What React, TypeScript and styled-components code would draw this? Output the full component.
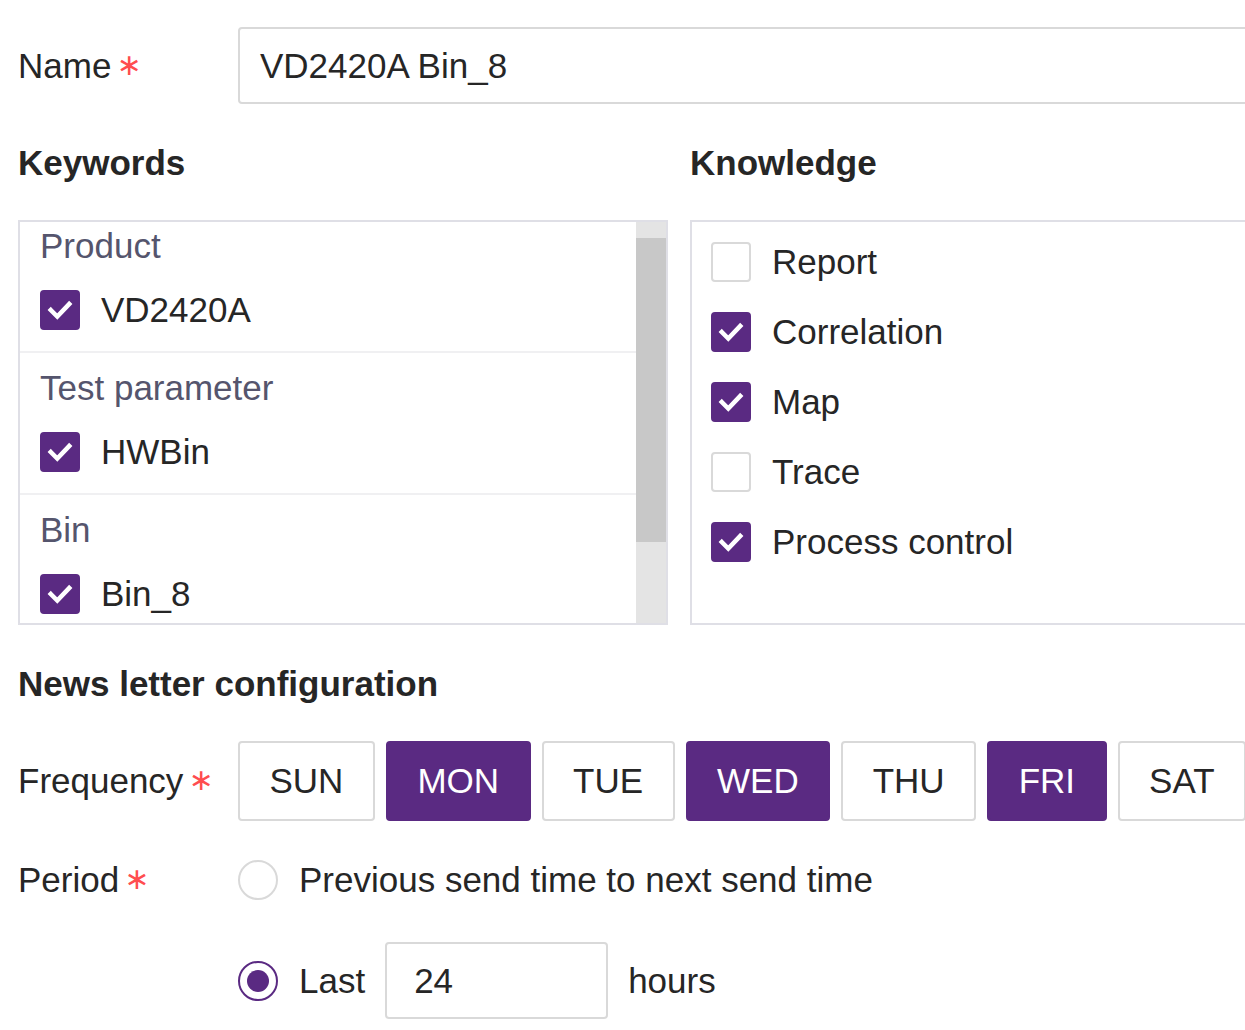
import React from 'react';
import styled, { createGlobalStyle } from 'styled-components';

const Global = createGlobalStyle`
  html, body {
    margin: 0;
    padding: 0;
    overflow: hidden;
    background: #ffffff;
  }
  body {
    font-family: "Liberation Sans", Arial, sans-serif;
    color: #262626;
  }
`;

const PURPLE = '#5a2a82';

const Page = styled.div`
  width: 1300px;
  padding: 27px 0 0 18px;
  box-sizing: border-box;
  font-size: 35px;
`;

const Row = styled.div<{ top?: number; height: number }>`
  display: flex;
  align-items: center;
  height: ${p => p.height}px;
  margin-top: ${p => p.top || 0}px;
`;

const Label = styled.div`
  width: 220px;
  flex: none;
  display: flex;
  align-items: center;
  line-height: 40px;
`;

const Star = styled.span`
  color: #ff4d4f;
  font-family: "DejaVu Sans", sans-serif;
  font-size: 30px;
  margin-left: 5px;
  position: relative;
  top: -1px;
`;

const TextInput = styled.div<{ width?: number }>`
  box-sizing: border-box;
  height: 77px;
  ${p => (p.width ? `width: ${p.width}px;` : 'flex: 1;')}
  border: 2px solid #d9d9d9;
  border-radius: 4px;
  display: flex;
  align-items: center;
  padding-left: ${p => (p.width ? 27 : 20)}px;
`;

const Heading = styled.div<{ top: number }>`
  font-weight: bold;
  line-height: 40px;
  margin-top: ${p => p.top}px;
`;

const Columns = styled.div`
  display: grid;
  grid-template-columns: 650px 1fr;
  column-gap: 22px;
`;

const Panel = styled.div`
  margin-top: 37px;
  height: 405px;
  box-sizing: border-box;
  border: 2px solid #dfdfe6;
  display: flex;
  overflow: hidden;
`;

const ScrollArea = styled.div`
  flex: 1;
  overflow: hidden;
`;

const GroupList = styled.div`
  margin-top: -11px;
`;

const Group = styled.div`
  padding: 15px 0 21px 20px;
  border-bottom: 2px solid #f0f0f2;
`;

const GroupTitle = styled.div`
  line-height: 40px;
  color: #55556d;
`;

const Option = styled.div<{ top?: number }>`
  display: flex;
  align-items: center;
  height: 40px;
  margin-top: ${p => p.top || 0}px;
  gap: 21px;
`;

const Box = styled.span<{ checked: boolean }>`
  width: 40px;
  height: 40px;
  box-sizing: border-box;
  border-radius: 4px;
  flex: none;
  display: flex;
  align-items: center;
  justify-content: center;
  background: ${p => (p.checked ? PURPLE : '#ffffff')};
  border: 2px solid ${p => (p.checked ? PURPLE : '#d9d9d9')};
`;

const Track = styled.div`
  width: 30px;
  flex: none;
  background: #e4e4e4;
  padding-top: 16px;
`;

const Thumb = styled.div`
  height: 304px;
  background: #c8c8c8;
`;

const KnowledgeList = styled.div`
  padding: 20px 0 0 19px;
  display: flex;
  flex-direction: column;
  gap: 30px;
`;

const Days = styled.div`
  display: flex;
  gap: 11px;
`;

const Day = styled.div<{ active: boolean }>`
  height: 80px;
  box-sizing: border-box;
  padding: 0 29.5px;
  display: flex;
  align-items: center;
  border-radius: 4px;
  border: 2px solid ${p => (p.active ? PURPLE : '#d9d9d9')};
  background: ${p => (p.active ? PURPLE : '#ffffff')};
  color: ${p => (p.active ? '#ffffff' : '#262626')};
`;

const Radio = styled.span<{ checked: boolean }>`
  width: 40px;
  height: 40px;
  box-sizing: border-box;
  border-radius: 50%;
  flex: none;
  margin-right: 1px;
  border: 2px solid ${p => (p.checked ? PURPLE : '#d9d9d9')};
  display: flex;
  align-items: center;
  justify-content: center;
  &::after {
    content: '';
    width: 22px;
    height: 22px;
    border-radius: 50%;
    background: ${p => (p.checked ? PURPLE : 'transparent')};
  }
`;

const Choice = styled.div`
  display: flex;
  align-items: center;
  gap: 20px;
`;

const Check = ({ checked }: { checked: boolean }) => (
  <Box checked={checked}>
    {checked && (
      <svg width="26" height="26" viewBox="0 0 24 24">
        <polyline points="3.5,12 9.5,18 20.5,6.5" fill="none" stroke="#fff" strokeWidth="4.2" strokeLinecap="square" />
      </svg>
    )}
  </Box>
);

const groups = [
  { title: 'Product', value: 'VD2420A' },
  { title: 'Test parameter', value: 'HWBin' },
  { title: 'Bin', value: 'Bin_8' },
];

const knowledge = [
  { name: 'Report', on: false },
  { name: 'Correlation', on: true },
  { name: 'Map', on: true },
  { name: 'Trace', on: false },
  { name: 'Process control', on: true },
];

const days = [
  { d: 'SUN', on: false },
  { d: 'MON', on: true },
  { d: 'TUE', on: false },
  { d: 'WED', on: true },
  { d: 'THU', on: false },
  { d: 'FRI', on: true },
  { d: 'SAT', on: false },
];

const App = () => {
  return (
    <Page>
      <Global />
      <Row height={77}>
        <Label>Name<Star>∗</Star></Label>
        <TextInput>VD2420A Bin_8</TextInput>
      </Row>
      <Columns>
        <div>
          <Heading top={39}>Keywords</Heading>
          <Panel>
            <ScrollArea>
              <GroupList>
                {groups.map(g => (
                  <Group key={g.title}>
                    <GroupTitle>{g.title}</GroupTitle>
                    <Option top={24}>
                      <Check checked />
                      <span>{g.value}</span>
                    </Option>
                  </Group>
                ))}
              </GroupList>
            </ScrollArea>
            <Track>
              <Thumb />
            </Track>
          </Panel>
        </div>
        <div>
          <Heading top={39}>Knowledge</Heading>
          <Panel>
            <KnowledgeList>
              {knowledge.map(k => (
                <Option key={k.name}>
                  <Check checked={k.on} />
                  <span>{k.name}</span>
                </Option>
              ))}
            </KnowledgeList>
          </Panel>
        </div>
      </Columns>
      <Heading top={39}>News letter configuration</Heading>
      <Row height={80} top={37}>
        <Label>Frequency<Star>∗</Star></Label>
        <Days>
          {days.map(x => (
            <Day key={x.d} active={x.on}>{x.d}</Day>
          ))}
        </Days>
      </Row>
      <Row height={60} top={29}>
        <Label>Period<Star>∗</Star></Label>
        <Choice>
          <Radio checked={false} />
          <span>Previous send time to next send time</span>
        </Choice>
      </Row>
      <Row height={77} top={32}>
        <Label />
        <Choice>
          <Radio checked />
          <span>Last</span>
          <TextInput width={223}>24</TextInput>
          <span>hours</span>
        </Choice>
      </Row>
    </Page>
  );
};

export default App;
